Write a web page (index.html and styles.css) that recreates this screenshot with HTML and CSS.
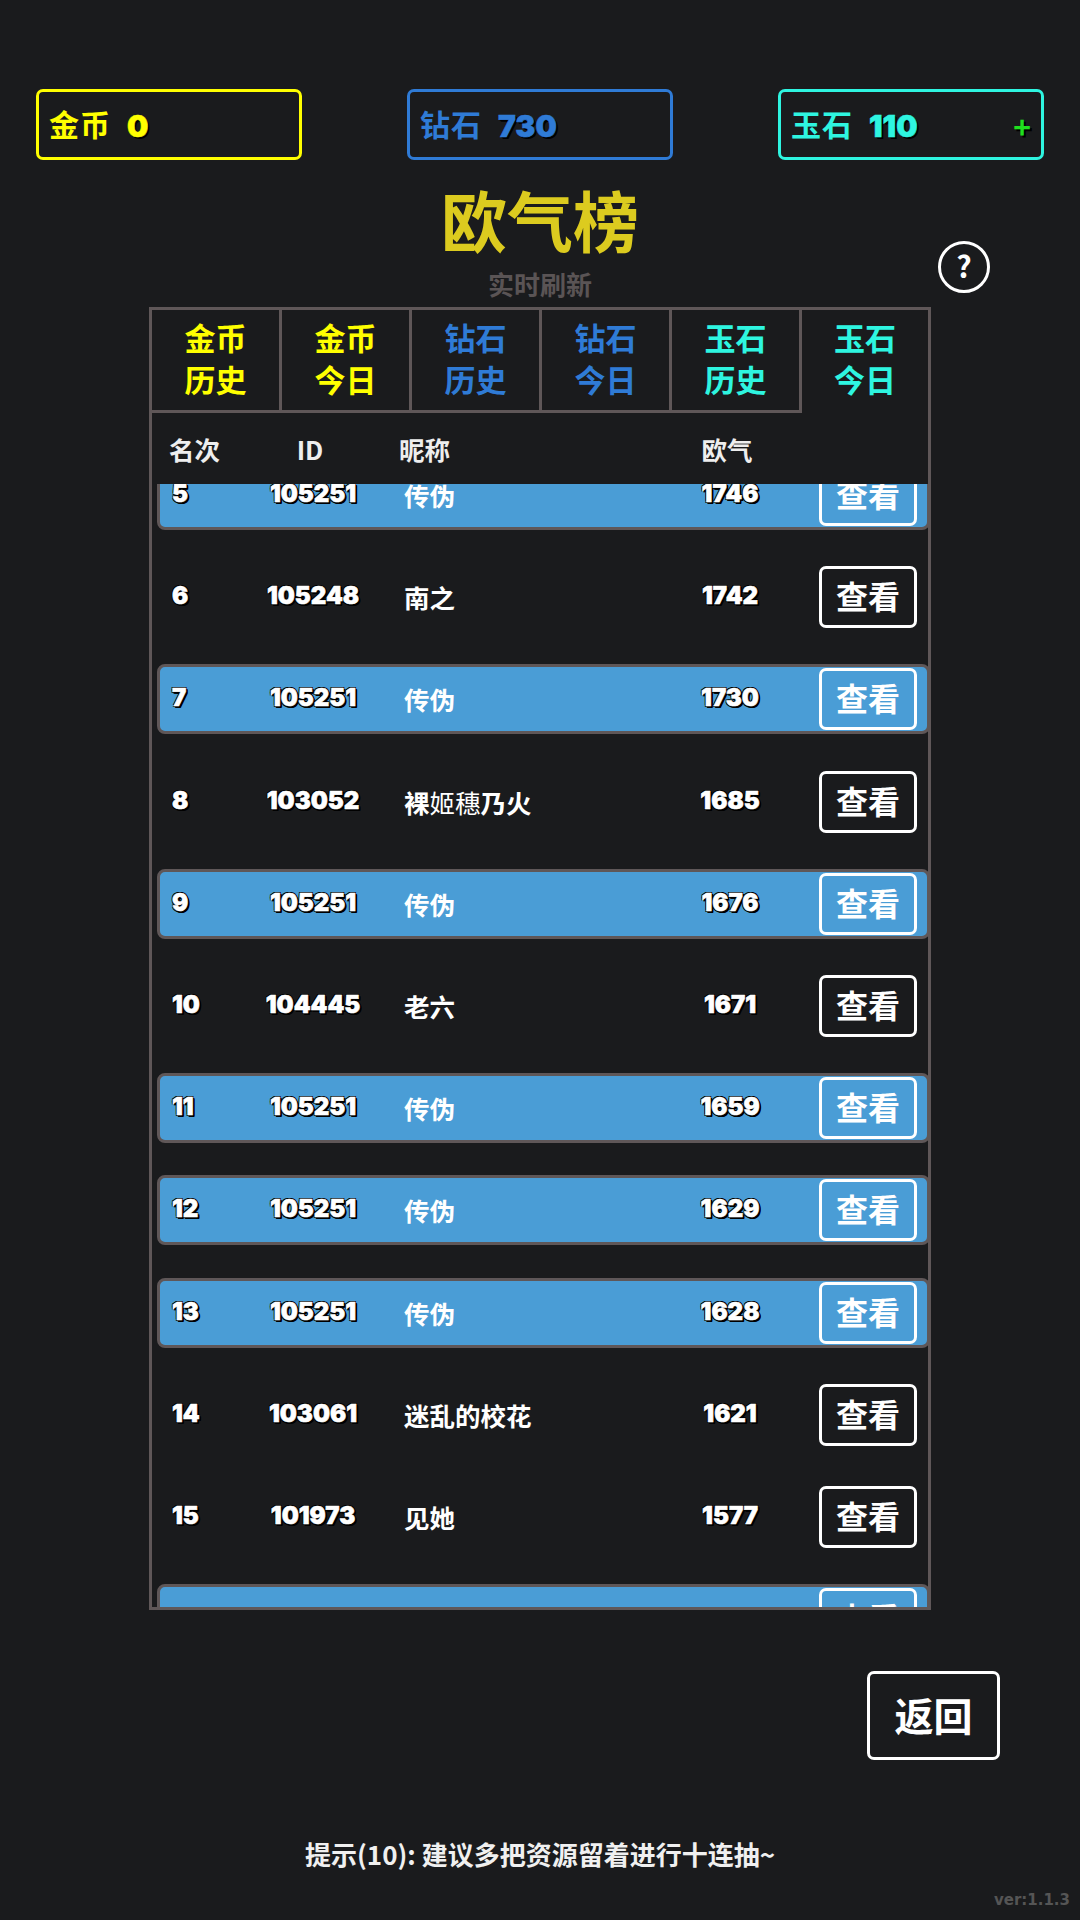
FILE: index.html
```html
<!DOCTYPE html>
<html lang="zh-CN">
<head>
  <meta charset="UTF-8">
  <title>欧气榜</title>
  <link rel="stylesheet" href="styles.css">
</head>
<body>

  <div class="wallet">
    <div class="chip gold"><span class="chip-label">金币</span><span class="chip-value">0</span></div>
    <div class="chip diamond"><span class="chip-label">钻石</span><span class="chip-value">730</span></div>
    <div class="chip jade"><span class="chip-label">玉石</span><span class="chip-value">110</span><span class="chip-plus">+</span></div>
  </div>

  <div class="heading">
    <h1>欧气榜</h1>
    <p>实时刷新</p>
    <div class="help">?</div>
  </div>

  <div class="board">
    <div class="tabs">
      <div class="tab gold">金币<br>历史</div>
      <div class="tab gold">金币<br>今日</div>
      <div class="tab diamond">钻石<br>历史</div>
      <div class="tab diamond">钻石<br>今日</div>
      <div class="tab jade">玉石<br>历史</div>
      <div class="tab jade active">玉石<br>今日</div>
    </div>

    <div class="cols">
      <span>名次</span>
      <span class="mid">ID</span>
      <span class="nick">昵称</span>
      <span class="mid">欧气</span>
    </div>

    <div class="list">
      <div class="row me first"><span class="num">5</span><span class="num mid">105251</span><span class="nick">传伪</span><span class="num mid">1746</span><button>查看</button></div>
      <div class="row"><span class="num">6</span><span class="num mid">105248</span><span class="nick">南之</span><span class="num mid">1742</span><button>查看</button></div>
      <div class="row me"><span class="num">7</span><span class="num mid">105251</span><span class="nick">传伪</span><span class="num mid">1730</span><button>查看</button></div>
      <div class="row"><span class="num">8</span><span class="num mid">103052</span><span class="nick">裸<i>姬穗</i>乃火</span><span class="num mid">1685</span><button>查看</button></div>
      <div class="row me"><span class="num">9</span><span class="num mid">105251</span><span class="nick">传伪</span><span class="num mid">1676</span><button>查看</button></div>
      <div class="row"><span class="num">10</span><span class="num mid">104445</span><span class="nick">老六</span><span class="num mid">1671</span><button>查看</button></div>
      <div class="row me"><span class="num">11</span><span class="num mid">105251</span><span class="nick">传伪</span><span class="num mid">1659</span><button>查看</button></div>
      <div class="row me"><span class="num">12</span><span class="num mid">105251</span><span class="nick">传伪</span><span class="num mid">1629</span><button>查看</button></div>
      <div class="row me"><span class="num">13</span><span class="num mid">105251</span><span class="nick">传伪</span><span class="num mid">1628</span><button>查看</button></div>
      <div class="row"><span class="num">14</span><span class="num mid">103061</span><span class="nick">迷乱的校花</span><span class="num mid">1621</span><button>查看</button></div>
      <div class="row"><span class="num">15</span><span class="num mid">101973</span><span class="nick">见她</span><span class="num mid">1577</span><button>查看</button></div>
      <div class="row me"><span class="num">16</span><span class="num mid">105251</span><span class="nick">传伪</span><span class="num mid">1571</span><button>查看</button></div>
    </div>
  </div>

  <div class="back-bar">
    <button class="back">返回</button>
  </div>

  <div class="tip">提示(10): 建议多把资源留着进行十连抽~</div>
  <div class="version">ver:1.1.3</div>

</body>
</html>
```

FILE: styles.css
```css
* {
  box-sizing: border-box;
}
html, body {
  height: 1920px;
  overflow: hidden;
}
body {
  margin: 0;
  background: #1a1b1d;
  color: #fff;
  font-family: "Noto Sans CJK SC", "Noto Sans", sans-serif;
  font-weight: 700;
}

.gold { color: #ffff00; }
.diamond { color: #2f7bd6; }
.jade { color: #2ef5e0; }

/* top currency boxes */
.wallet {
  display: flex;
  justify-content: space-between;
  padding: 89px 36px 0;
}
.chip {
  width: 266px;
  height: 71px;
  padding: 0 10px 3px 10px;
  display: flex;
  align-items: center;
  gap: 16px;
  border: 3px solid currentColor;
  border-radius: 7px;
  font-size: 30px;
  line-height: 1;
}
.chip-label {
  letter-spacing: 1px;
}
.chip-value {
  margin-top: 5px;
  font-family: Inter, sans-serif;
  font-weight: 900;
  font-size: 30px;
  -webkit-text-stroke: 0.6px currentColor;
  text-shadow: 2px 2px 0 #000, 1px 1px 0 #000;
}
.chip-plus {
  margin-left: auto;
  margin-top: 5px;
  color: #1fe01f;
  font-size: 30px;
  text-shadow: 2px 2px 0 #000;
}

.heading {
  position: relative;
  height: 147px;
  text-align: center;
}
.heading h1 {
  margin: 0;
  padding-top: 18px;
  color: #dccb1f;
  font-size: 66px;
  line-height: 80px;
}
.heading p {
  margin: 0;
  padding-top: 8px;
  color: #5a5455;
  font-size: 26px;
  line-height: 36px;
}
.help {
  position: absolute;
  left: 938px;
  top: 81px;
  width: 52px;
  height: 52px;
  border: 3px solid #fff;
  border-radius: 50%;
  text-align: center;
  font-size: 30px;
  line-height: 42px;
}

/* ranking board */
.board {
  width: 782px;
  height: 1303px;
  margin: 0 auto;
  border: 3px solid #5f5758;
}
.tabs {
  display: grid;
  grid-template-columns: repeat(5, 130px) 126px;
  height: 103px;
}
.tab {
  border-right: 3px solid #5f5758;
  border-bottom: 3px solid #5f5758;
  padding-top: 6px;
  text-align: center;
  font-size: 31px;
  line-height: 42px;
}
.tab.active {
  border: 0;
}

.cols, .row {
  display: grid;
  grid-template-columns: 91px 100px 317px 100px 1fr;
  align-items: center;
}
.cols {
  height: 71px;
  padding-left: 17px;
  color: #eee;
  font-size: 25.5px;
}
.cols .nick {
  padding-left: 39px;
}
.mid {
  text-align: center;
}

.list {
  height: 1123px;
  overflow: hidden;
}
.row {
  width: 773px;
  height: 70px;
  margin: 0 0 32.2px 5px;
  padding: 0 10px 0 12px;
  border: 3px solid transparent;
  border-radius: 8px;
}
.row.first {
  margin-top: -24px;
}
.row.me {
  background: #4a9dd6;
  border-color: #5f5758;
}
.num {
  position: relative;
  top: -1px;
  font-family: Inter, sans-serif;
  font-weight: 900;
  font-size: 24px;
  line-height: 30px;
  -webkit-text-stroke: 0.6px #fff;
  text-shadow: -1px -1px 0 #000, 1px -1px 0 #000, -1px 1px 0 #000, 2px 2px 0 #000, 1px 2px 0 #000, 2px 1px 0 #000;
}
.nick {
  padding-left: 41px;
  font-size: 25.5px;
  line-height: 30px;
}
.row .nick {
  white-space: nowrap;
}
.nick i {
  font-style: normal;
  font-weight: 400;
}
.row button {
  justify-self: end;
  width: 98px;
  height: 62px;
  padding: 0 0 4px;
  background: transparent;
  color: #fff;
  border: 3px solid #fff;
  border-radius: 7px;
  font-family: inherit;
  font-weight: 700;
  font-size: 32px;
  line-height: 1;
}

.back-bar {
  display: flex;
  justify-content: flex-end;
  padding: 61px 80px 0 0;
}
.back {
  width: 133px;
  height: 89px;
  padding: 0 0 4px;
  background: transparent;
  color: #fff;
  border: 3px solid #fff;
  border-radius: 7px;
  font-family: inherit;
  font-weight: 700;
  font-size: 39px;
}

.tip {
  margin-top: 76px;
  text-align: center;
  font-size: 26px;
  line-height: 36px;
  color: #f0f0f0;
}
.version {
  position: absolute;
  right: 10px;
  bottom: 10px;
  color: #555;
  font-family: "DejaVu Sans", sans-serif;
  font-size: 15px;
  line-height: 20px;
}
```
